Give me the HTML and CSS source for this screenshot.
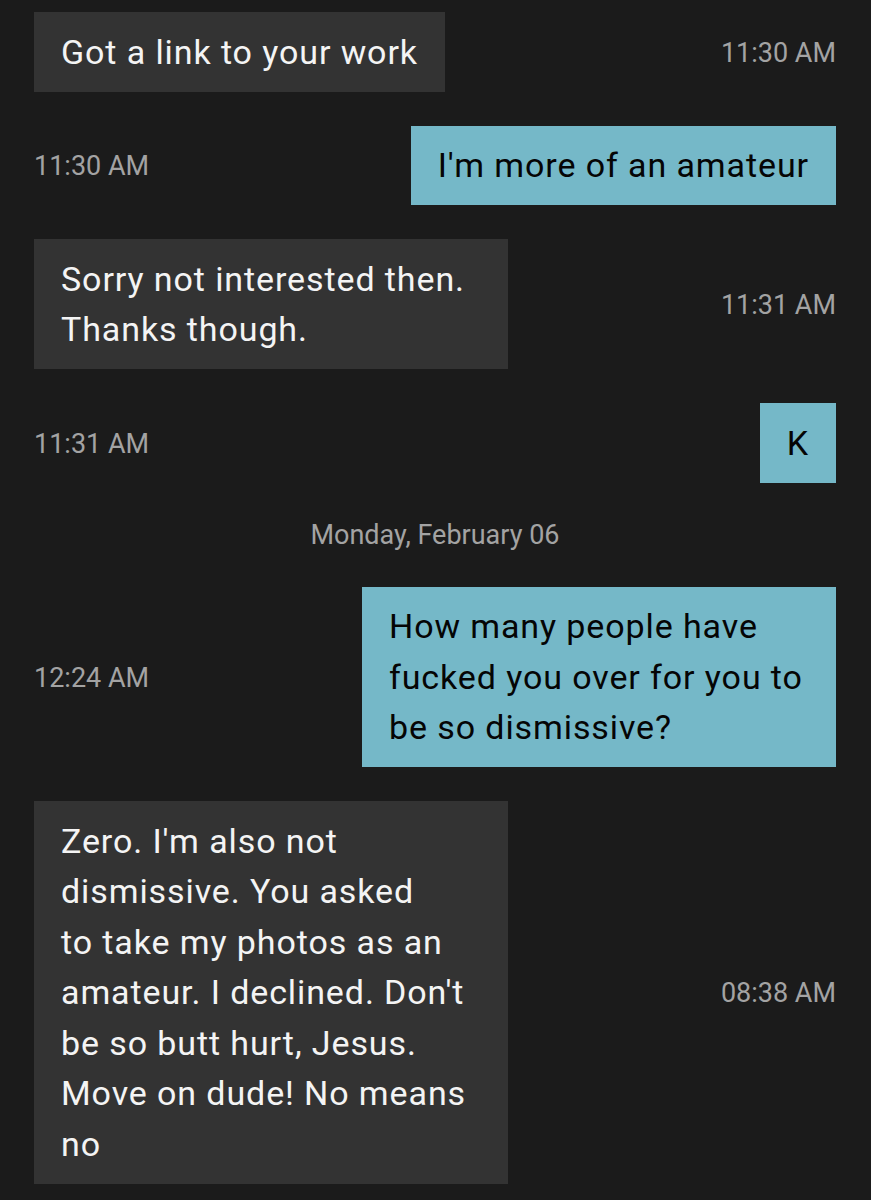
FILE: index.html
```html
<!DOCTYPE html>
<html lang="en">
<head>
    <meta charset="UTF-8">
    <meta name="viewport" content="width=device-width, initial-scale=1.0">
    <title>Messages</title>
    <link rel="stylesheet" href="styles.css">
</head>
<body>
    <div class="thread">
        <div class="row in">
            <div class="bubble">Got a link to your work</div>
            <span class="time">11:30 AM</span>
        </div>
        <div class="row out">
            <span class="time">11:30 AM</span>
            <div class="bubble">I'm more of an amateur</div>
        </div>
        <div class="row in">
            <div class="bubble">Sorry not interested then. Thanks though.</div>
            <span class="time">11:31 AM</span>
        </div>
        <div class="row out">
            <span class="time">11:31 AM</span>
            <div class="bubble">K</div>
        </div>
        <div class="day">Monday, February 06</div>
        <div class="row out">
            <span class="time">12:24 AM</span>
            <div class="bubble">How many people have fucked you over for you to be so dismissive?</div>
        </div>
        <div class="row in">
            <div class="bubble">Zero. I'm also not dismissive. You asked<br>to take my photos as an amateur. I declined. Don't be so butt hurt, Jesus. Move on dude! No means no</div>
            <span class="time">08:38 AM</span>
        </div>
    </div>
</body>
</html>
```

FILE: styles.css
```css
body {
    margin: 0;
    background-color: #1b1b1b;
    font-family: Roboto, "Noto Sans", sans-serif;
}
.thread {
    display: flex;
    flex-direction: column;
    gap: 34px;
    padding: 12px 35px 20px 34px;
}
.row {
    display: flex;
    align-items: center;
    justify-content: space-between;
}
.bubble {
    max-width: 420px;
    padding: 14.5px 27px;
    font-size: 34px;
    line-height: 50.5px;
    letter-spacing: 0.9px;
}
.in .bubble {
    background-color: #333333;
    color: #f4f4f4;
}
.out .bubble {
    background-color: #75b8c8;
    color: #050505;
}
.time {
    padding-top: 2px;
    font-size: 27px;
    color: #a3a3a3;
}
.day {
    text-align: center;
    font-size: 27px;
    line-height: 36px;
    color: #a3a3a3;
}
```
